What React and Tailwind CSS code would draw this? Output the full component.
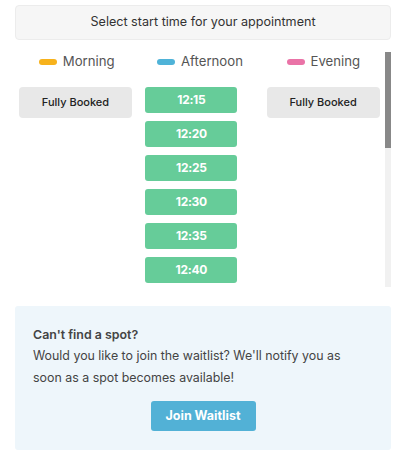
import React from 'react'

const font = { fontFamily: 'Inter, "Liberation Sans", sans-serif' }

const slots = [
  '12:15', '12:20', '12:25', '12:30', '12:35', '12:40', '12:45', '12:50',
  '12:55', '13:00', '13:05', '13:10', '13:15', '13:20', '13:25', '13:30',
]

function Legend({ color, label }) {
  return (
    <div className="flex items-center justify-center gap-[6px] h-[20px]">
      <span className={`w-[18px] h-[6px] rounded-full ${color}`} />
      <span className="text-[13.2px] text-[#555]">{label}</span>
    </div>
  )
}

function FullyBooked() {
  return (
    <div className="h-[31px] w-[113px] rounded-[4px] bg-[#e8e8e8] flex items-center justify-center text-[11px] font-medium text-[#222]">
      Fully Booked
    </div>
  )
}

export default function App() {
  return (
    <div className="w-[406px] h-[464px] bg-white pt-[5px] px-[15px]" style={font}>
      {/* Header */}
      <div className="h-[35px] rounded-[4px] bg-[#f6f6f6] border border-[#ececec] flex items-center justify-center text-[12.6px] text-[#333]">
        Select start time for your appointment
      </div>

      {/* Scroll area with drawn scrollbar */}
      <div className="mt-[12px] h-[235px] flex">
        <div className="flex-1 overflow-hidden">
          <div className="grid grid-cols-3">
            <Legend color="bg-[#f7b21c]" label="Morning" />
            <Legend color="bg-[#4fb3d8]" label="Afternoon" />
            <Legend color="bg-[#ea73a7]" label="Evening" />
          </div>
          <div className="grid grid-cols-3 mt-[15px] pb-[12px] items-start">
            <div className="pl-[4px]"><FullyBooked /></div>
            <div className="pl-[7px] flex flex-col gap-[8px]">
              {slots.map((s) => (
                <div key={s} className="h-[26px] w-[92px] rounded-[3px] bg-[#66cc99] flex items-center justify-center text-white font-bold text-[12px] tracking-[-0.3px]">
                  {s}
                </div>
              ))}
            </div>
            <div className="pl-[5px]"><FullyBooked /></div>
          </div>
        </div>
        <div className="w-[6px] bg-[#f1f1f1] flex flex-col">
          <div className="h-[96px] bg-[#888]" />
        </div>
      </div>

      {/* Waitlist */}
      <div className="mt-[19px] h-[144px] rounded-[3px] bg-[#eef6fb] pt-[18px] pl-[18px] pr-[36px] text-[12.4px] text-[#444]">
        <p className="font-semibold leading-[21px]">Can't find a spot?</p>
        <p className="leading-[22px]">
          Would you like to join the waitlist? We'll notify you as soon as a spot becomes available!
        </p>
        <div className="flex justify-center mt-[12px] pl-[18px]">
          <button className="h-[30px] w-[105px] rounded-[3px] bg-[#52b1d6] text-white font-bold text-[12.5px]">
            Join Waitlist
          </button>
        </div>
      </div>
    </div>
  )
}
